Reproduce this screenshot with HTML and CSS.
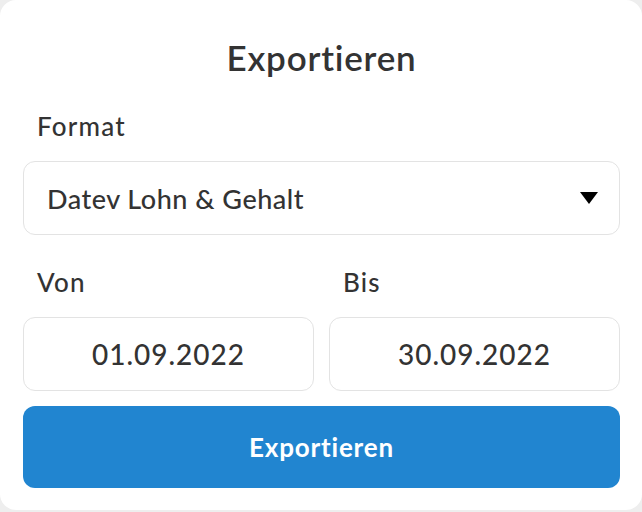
FILE: index.html
```html
<!DOCTYPE html>
<html lang="de">
<head>
<meta charset="utf-8">
<title>Exportieren</title>
<link rel="stylesheet" href="styles.css">
</head>
<body>
<div class="card">
  <h1 class="title">Exportieren</h1>
  <div class="label">Format</div>
  <div class="select">
    <span class="select-text">Datev Lohn &amp; Gehalt</span>
    <svg class="caret" width="18" height="12" viewBox="0 0 18 12"><polygon points="0,0 18,0 9,12" fill="#000"/></svg>
  </div>
  <div class="dates">
    <div class="field">
      <div class="label">Von</div>
      <div class="date">01.09.2022</div>
    </div>
    <div class="field">
      <div class="label">Bis</div>
      <div class="date">30.09.2022</div>
    </div>
  </div>
  <button class="btn">Exportieren</button>
</div>
</body>
</html>
```
FILE: styles.css
```css
html, body {
  margin: 0;
  padding: 0;
}
body {
  background: #eeeeee;
  font-family: Lato, "Noto Sans", sans-serif;
  color: #333;
}
.card {
  box-sizing: border-box;
  background: #fff;
  height: 510px;
  border-radius: 16px;
  padding: 37px 22px 0 23px;
  display: flex;
  flex-direction: column;
}
.title {
  margin: 0;
  font-size: 35px;
  line-height: 40px;
  font-weight: 600;
  letter-spacing: 0.8px;
  text-align: center;
  color: #333;
}
.label {
  font-size: 26px;
  line-height: 30px;
  font-weight: 500;
  letter-spacing: 1.2px;
  padding-left: 14px;
  color: #333;
}
.card > .label {
  margin-top: 34px;
}
.select {
  box-sizing: border-box;
  margin-top: 20px;
  height: 74px;
  border: 1.5px solid #e3e3e3;
  border-radius: 12px;
  display: flex;
  align-items: center;
  justify-content: space-between;
  padding: 0 21px 0 23px;
}
.select-text {
  font-size: 27px;
  font-weight: 500;
  letter-spacing: 0.5px;
}
.caret {
  display: block;
}
.dates {
  margin-top: 32px;
  display: grid;
  grid-template-columns: 1fr 1fr;
  column-gap: 15px;
}
.date {
  box-sizing: border-box;
  margin-top: 20px;
  height: 74px;
  border: 1.5px solid #e3e3e3;
  border-radius: 12px;
  display: flex;
  align-items: center;
  justify-content: center;
  font-size: 28px;
  font-weight: 500;
  letter-spacing: 1px;
}
.btn {
  margin-top: 15px;
  height: 82px;
  border: 0;
  border-radius: 12px;
  background: #2185d0;
  color: #fff;
  font-family: Lato, "Noto Sans", sans-serif;
  font-size: 26px;
  font-weight: 700;
  letter-spacing: 0.8px;
}
```
